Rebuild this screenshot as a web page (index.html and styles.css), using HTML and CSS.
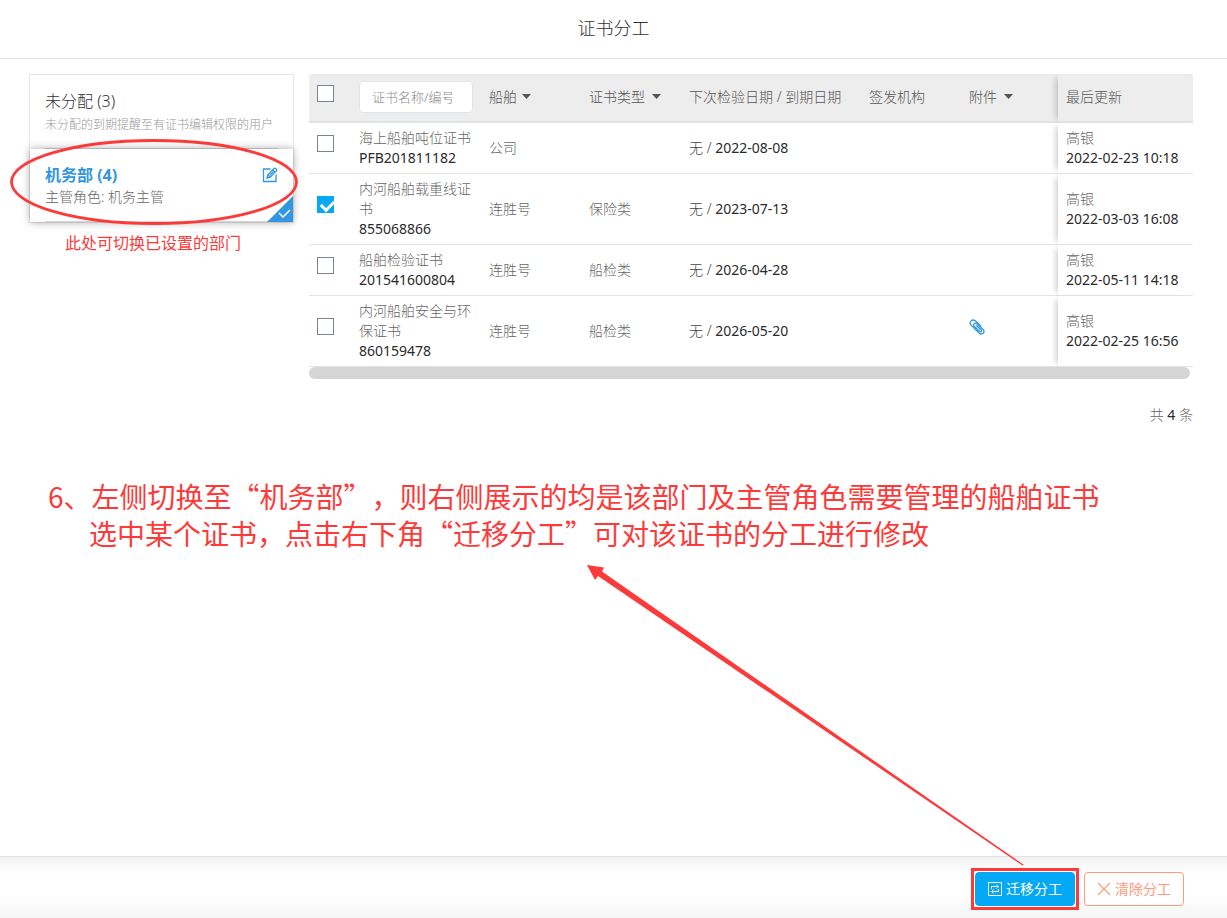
FILE: index.html
```html
<!DOCTYPE html>
<html lang="zh-CN">
<head>
<meta charset="utf-8">
<title>证书分工</title>
<link rel="stylesheet" href="styles.css">
</head>
<body>
<header class="page-header"><h1 class="page-title">证书分工</h1></header>

<main class="content">
  <aside class="side">
    <div class="dept-list">
      <div class="dept">
        <div class="dept-name">未分配 (3)</div>
        <div class="dept-hint">未分配的到期提醒至有证书编辑权限的用户</div>
      </div>
      <div class="dept dept-active">
        <div class="dept-row">
          <div class="dept-name">机务部 (4)</div>
          <button class="edit" type="button" aria-label="编辑">
            <svg width="16" height="16" viewBox="0 0 16 16" fill="none" stroke="currentColor" stroke-width="1.3"><path d="M8.500 2H1.500V14.500H14V7.500"/><path d="M5 11l.8-3.200L12 1.500q.8-.7 1.600 0l.8.8q.7.8 0 1.600L8.200 10.100zM10.600 3l2.400 2.400M5.800 7.800l2.400 2.300M7.800 8.200l3.800-3.800"/></svg>
          </button>
        </div>
        <div class="dept-role">主管角色: 机务主管</div>
        <svg class="corner" width="26" height="26" viewBox="0 0 26 26"><path d="M26 0V26H0z" fill="#3296e1"/><path d="M12 17l4 4 7-7" fill="none" stroke="#fff" stroke-width="1.500"/></svg>
      </div>
      <svg class="ring" width="290" height="88" viewBox="0 0 290 88"><ellipse cx="145" cy="44" rx="142.500" ry="41.500" fill="none" stroke="#fc3a3a" stroke-width="2.800"/></svg>
    </div>
    <p class="side-note">此处可切换已设置的部门</p>
  </aside>

  <section class="main">
    <table class="certs">
      <colgroup><col class="c-check"><col class="c-name"><col class="c-mid"><col class="c-mid"><col class="c-date"><col class="c-mid"><col><col class="c-last"></colgroup>
      <thead>
        <tr>
          <th><input class="check" type="checkbox" aria-label="全选"></th>
          <th><input class="search" type="text" placeholder="证书名称/编号" aria-label="证书名称/编号"></th>
          <th><span class="filter"><select aria-label="船舶"><option>船舶</option></select><svg width="9" height="5" viewBox="0 0 9 5"><path d="M0 0h9L4.500 5z" fill="#555"/></svg></span></th>
          <th><span class="filter filter-wide"><select aria-label="证书类型"><option>证书类型</option></select><svg width="9" height="5" viewBox="0 0 9 5"><path d="M0 0h9L4.500 5z" fill="#555"/></svg></span></th>
          <th>下次检验日期 / 到期日期</th>
          <th>签发机构</th>
          <th><span class="filter filter-wide"><select aria-label="附件"><option>附件</option></select><svg width="9" height="5" viewBox="0 0 9 5"><path d="M0 0h9L4.500 5z" fill="#555"/></svg></span></th>
          <th class="last">最后更新</th>
        </tr>
      </thead>
      <tbody>
        <tr>
          <td><input class="check" type="checkbox" aria-label="选择 PFB201811182"></td>
          <td>海上船舶吨位证书<br><span class="num">PFB201811182</span></td>
          <td>公司</td><td></td>
          <td><span class="dark">无 /</span> <span class="num">2022-08-08</span></td>
          <td></td><td></td>
          <td class="last">高银<br><span class="num">2022-02-23 10:18</span></td>
        </tr>
        <tr>
          <td><input class="check" type="checkbox" checked aria-label="选择 855068866"></td>
          <td>内河船舶载重线证书<br><span class="num">855068866</span></td>
          <td>连胜号</td><td>保险类</td>
          <td><span class="dark">无 /</span> <span class="num">2023-07-13</span></td>
          <td></td><td></td>
          <td class="last">高银<br><span class="num">2022-03-03 16:08</span></td>
        </tr>
        <tr>
          <td><input class="check" type="checkbox" aria-label="选择 201541600804"></td>
          <td>船舶检验证书<br><span class="num">201541600804</span></td>
          <td>连胜号</td><td>船检类</td>
          <td><span class="dark">无 /</span> <span class="num">2026-04-28</span></td>
          <td></td><td></td>
          <td class="last">高银<br><span class="num">2022-05-11 14:18</span></td>
        </tr>
        <tr>
          <td><input class="check" type="checkbox" aria-label="选择 860159478"></td>
          <td>内河船舶安全与环保证书<br><span class="num">860159478</span></td>
          <td>连胜号</td><td>船检类</td>
          <td><span class="dark">无 /</span> <span class="num">2026-05-20</span></td>
          <td></td>
          <td><svg class="clip" width="16" height="16" viewBox="0 0 16 16" fill="none" stroke="#3296e1" stroke-width="1.300" stroke-linecap="round"><path d="M11.800 7L6.200 1.800C3.300-.5-.4 3 1.800 5.900L10.300 14.200C12.700 16.300 16.400 13.300 14.300 10.700L8 4.700C6 3.200 3.600 5.300 5.200 7.300L10.600 12.400C12 13.300 13.200 12 12.200 10.900L7.600 6.700"/></svg></td>
          <td class="last">高银<br><span class="num">2022-02-25 16:56</span></td>
        </tr>
      </tbody>
    </table>
    <div class="scrollbar"></div>
    <div class="total">共 <span class="num">4</span> 条</div>
  </section>
</main>

<div class="note">
  <p class="note-first">6、左侧切换至“机务部”，则右侧展示的均是该部门及主管角色需要管理的船舶证书</p>
  <p class="note-second">选中某个证书，点击右下角“迁移分工”可对该证书的分工进行修改</p>
</div>

<footer class="page-footer">
  <div class="frame">
    <button class="btn btn-primary" type="button"><svg width="14" height="14" viewBox="0 0 14 14" fill="none" stroke="currentColor"><path d="M.5.5h13v13H.5z"/><path d="M3.500 7V4.500h6M10.500 7v2.500h-6M8.500 2.500l2 2-2 2M5.500 7.500l-2 2 2 2"/></svg>迁移分工</button>
    <svg class="arrow" width="440" height="304" viewBox="0 0 440 304"><path d="M2 2L19 4.500 17 8.500 439 302 437.500 302.500 13 13 10 17z" fill="#fc3a3a"/></svg>
  </div>
  <button class="btn btn-clear" type="button"><svg width="14" height="14" viewBox="0 0 14 14" fill="none" stroke="currentColor" stroke-width="1.200"><path d="M1 1l12 12M13 1L1 13"/></svg>清除分工</button>
</footer>
</body>
</html>
```

FILE: styles.css
```css
* { box-sizing: border-box; }

body {
  margin: 0;
  min-height: 100vh;
  display: flex;
  flex-direction: column;
  background: #fff;
  color: #666;
  font: 300 14px/20px "Noto Sans", "Noto Sans CJK SC", sans-serif;
}

h1, p { margin: 0; }

button, input, select { font: inherit; color: inherit; }

.page-header {
  padding: 15px 0 17px;
  border-bottom: 1px solid #e2e2e2;
  text-align: center;
}

.page-title {
  color: #333;
  font-size: 18px;
  font-weight: 300;
  line-height: 26px;
}

.content {
  display: flex;
  gap: 15px;
  padding: 15px 34px 0 29px;
}

.side { flex: 0 0 265px; }

.dept-list {
  position: relative;
  border: 1px solid #e7e7e7;
}

.dept {
  position: relative;
  height: 74px;
  padding: 14px 15px;
}

.dept::after {
  content: "";
  position: absolute;
  left: 15px;
  right: 15px;
  bottom: 0;
  border-bottom: 1px solid #d5d5d5;
}

.dept-name {
  color: #333;
  font-size: 16px;
  line-height: 24px;
}

.dept-hint {
  color: #999;
  font-size: 12px;
  line-height: 24px;
  white-space: nowrap;
}

.dept-active {
  height: 73px;
  background: #fff;
  box-shadow: 0 0 8px rgba(0, 0, 0, .35);
}

.dept-active .dept-name { color: #3296e1; font-weight: 700; }

.dept-row {
  display: flex;
  justify-content: space-between;
  align-items: center;
}

.edit {
  display: flex;
  padding: 0;
  border: 0;
  background: none;
  color: #3296e1;
}

.corner { position: absolute; right: 0; bottom: 0; z-index: 1; }

.ring { position: absolute; left: -21px; top: 63px; z-index: 2; }

.side-note {
  margin-top: 8px;
  padding-left: 36px;
  color: #fc3a3a;
  font-size: 16px;
  font-weight: 400;
  line-height: 24px;
}

.main { flex: 1; min-width: 0; }

.certs {
  width: 100%;
  table-layout: fixed;
  border-collapse: separate;
  border-spacing: 0;
}

.c-check { width: 42px; }
.c-name { width: 130px; }
.c-mid { width: 100px; }
.c-date { width: 180px; }
.c-last { width: 135px; }

.certs th, .certs td {
  padding: 5px 8px;
  border-bottom: 1px solid #e4e4e4;
  text-align: left;
  vertical-align: middle;
}

.certs th {
  height: 49px;
  padding: 4px 8px 6px;
  border-bottom: 2px solid #e0e4e7;
  color: #555;
  font-weight: 300;
  white-space: nowrap;
}

.certs thead tr { background: #ededed; }

.certs .last { box-shadow: -6px 0 6px -4px rgba(0, 0, 0, .2); }
.certs td.last { background: #fff; }
.certs th.last { background: #ededed; }

.num { color: #2b2b2b; font-weight: 400; }
.dark { color: #444; }

.check {
  appearance: none;
  display: block;
  width: 17px;
  height: 17px;
  margin: 0 0 9px;
  border: 1px solid #7b8591;
  background: #fff;
}

.certs th .check { margin-bottom: 7px; }

.check:checked {
  border-color: #03a9f4;
  background: #03a9f4;
  position: relative;
}

.check:checked::after {
  content: "";
  position: absolute;
  left: 3px;
  top: 3px;
  width: 10px;
  height: 6px;
  border-left: 3px solid #fff;
  border-bottom: 3px solid #fff;
  transform: rotate(-45deg);
}

.search {
  display: block;
  width: 100%;
  height: 32px;
  padding: 0 20px 0 12px;
  border: 1px solid #e0e5ea;
  border-radius: 4px;
  background: #fff;
  font-size: 13px;
}

.search::placeholder { color: #888; }

.filter { display: flex; align-items: center; gap: 5px; }
.filter-wide { gap: 7px; }

.filter select {
  appearance: none;
  padding: 0;
  border: 0;
  background: none;
}

.clip { display: block; margin-bottom: 9px; }

.scrollbar {
  height: 12px;
  margin-right: 3px;
  border-radius: 6px;
  background: #d5d5d5;
}

.total { margin-top: 26px; text-align: right; }

.note {
  padding: 53px 48px 0;
  color: #fc3a3a;
  font: 28px/37px "Noto Sans CJK SC", sans-serif;
  text-spacing-trim: space-all;
}

.note-second { padding-left: 41px; }

.page-footer {
  display: flex;
  justify-content: flex-end;
  align-items: center;
  gap: 5px;
  margin-top: auto;
  padding: 11px 43px 8px;
  border-top: 1px solid #e2e2e2;
  background: linear-gradient(#f3f3f3, #fff 30%, #fff 60%, #f5f5f5);
}

.frame {
  position: relative;
  padding: 1px;
  border: 3px solid #fc3a3a;
  background: #fff;
}

.arrow { position: absolute; right: 51px; bottom: 40px; pointer-events: none; }

.btn {
  display: flex;
  justify-content: center;
  align-items: center;
  gap: 4px;
  width: 100px;
  height: 34px;
  padding: 0;
  border: 1px solid;
  border-radius: 4px;
  font-weight: 400;
}

.btn-primary { border-color: #03a9f4; background: #03a9f4; color: #fff; }
.btn-clear { border-color: #ff9b7b; background: #fff; color: #ff9b7b; }
```
